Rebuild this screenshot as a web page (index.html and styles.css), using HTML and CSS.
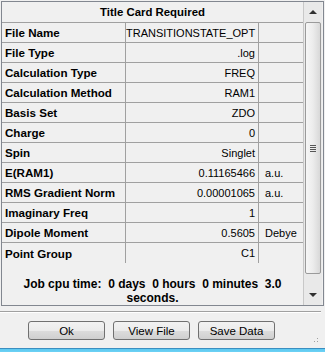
FILE: index.html
```html
<!DOCTYPE html>
<html lang="en">
<head>
    <meta charset="UTF-8">
    <title>Title Card Required</title>
    <link rel="stylesheet" href="styles.css">
</head>
<body>
    <div class="panel">
        <div class="sheet">
            <div class="title">Title Card Required</div>
            <table class="props">
                <tr><td class="name">File Name</td><td class="value">TRANSITIONSTATE_OPT</td><td class="unit"></td></tr>
                <tr><td class="name">File Type</td><td class="value">.log</td><td class="unit"></td></tr>
                <tr><td class="name">Calculation Type</td><td class="value">FREQ</td><td class="unit"></td></tr>
                <tr><td class="name">Calculation Method</td><td class="value">RAM1</td><td class="unit"></td></tr>
                <tr><td class="name">Basis Set</td><td class="value">ZDO</td><td class="unit"></td></tr>
                <tr><td class="name">Charge</td><td class="value">0</td><td class="unit"></td></tr>
                <tr><td class="name">Spin</td><td class="value">Singlet</td><td class="unit"></td></tr>
                <tr><td class="name">E(RAM1)</td><td class="value">0.11165466</td><td class="unit">a.u.</td></tr>
                <tr><td class="name">RMS Gradient Norm</td><td class="value">0.00001065</td><td class="unit">a.u.</td></tr>
                <tr><td class="name">Imaginary Freq</td><td class="value">1</td><td class="unit"></td></tr>
                <tr><td class="name">Dipole Moment</td><td class="value">0.5605</td><td class="unit">Debye</td></tr>
                <tr class="last"><td class="name">Point Group</td><td class="value">C1</td><td class="unit"></td></tr>
            </table>
            <div class="cpu">Job cpu time:  0 days  0 hours  0 minutes  3.0<br>seconds.</div>
        </div>
        <div class="scrollbar">
            <div class="arrow"><span class="tri up"></span></div>
            <div class="thumb"><span class="grip"></span></div>
            <div class="track"></div>
            <div class="arrow"><span class="tri down"></span></div>
        </div>
    </div>

    <div class="separator"></div>

    <div class="actions">
        <button class="btn">Ok</button>
        <button class="btn">View File</button>
        <button class="btn">Save Data</button>
        <span class="resize-grip"></span>
    </div>

    <div class="taskbar"></div>
</body>
</html>
```

FILE: styles.css
```css
body {
    margin: 0;
    width: 325px;
    height: 352px;
    overflow: hidden;
    background-color: #f0f0f0;
    font-family: "Liberation Sans", Arial, sans-serif;
    font-size: 11px;
    color: #000;
}

.panel {
    display: flex;
    margin: 1px 1px 0 1px;
    height: 303px;
    border: 1px solid #828790;
    background-color: #f0f0f0;
}

.sheet {
    width: 301px;
}

.title {
    height: 20px;
    line-height: 20px;
    text-align: center;
    font-weight: bold;
    font-size: 11.4px;
    border-bottom: 1px solid #a0a0a0;
}

.props {
    width: 301px;
    border-collapse: collapse;
    table-layout: fixed;
}

.props td {
    height: 19px;
    padding: 0;
    border-bottom: 1px solid #a0a0a0;
    border-right: 1px solid #a0a0a0;
    white-space: nowrap;
}

.props tr.last td {
    border-bottom: none;
    height: 20px;
}

.props .name {
    width: 120px;
    padding-left: 3px;
    font-weight: bold;
    font-size: 11.6px;
}

.props .value {
    width: 129px;
    padding-right: 3px;
    text-align: right;
}

.props .unit {
    padding-left: 6px;
    border-right: none;
}

.cpu {
    padding-top: 14px;
    line-height: 14px;
    text-align: center;
    font-weight: bold;
    font-size: 12px;
    white-space: pre;
}

/* scrollbar */
.scrollbar {
    display: flex;
    flex-direction: column;
    width: 18px;
    border-left: 1px solid #c8c8c8;
    background-color: #e9e9e9;
}

.arrow {
    height: 20px;
    display: flex;
    align-items: center;
    justify-content: center;
}

.tri {
    width: 0;
    height: 0;
    border-left: 4px solid transparent;
    border-right: 4px solid transparent;
}

.tri.up {
    border-bottom: 4px solid #303030;
}

.tri.down {
    border-top: 4px solid #303030;
}

.thumb {
    height: 250px;
    margin: 0 1px;
    border: 1px solid #9a9a9a;
    border-radius: 2px;
    background: linear-gradient(to right, #f6f6f6, #ececec 50%, #d8d8d8);
    display: flex;
    align-items: center;
    justify-content: center;
}

.grip {
    width: 6px;
    height: 7px;
    background: repeating-linear-gradient(to bottom, #555 0 1px, transparent 1px 2px);
}

.track {
    flex: 1;
}

.separator {
    margin-top: 5px;
    width: 321px;
    height: 1px;
    background-color: #a0a0a0;
    border-bottom: 1px solid #ffffff;
}

.actions {
    position: relative;
    display: flex;
    gap: 8px;
    padding: 8px 0 0 28px;
    height: 27px;
}

.btn {
    width: 77px;
    height: 19px;
    padding: 0;
    border: 1px solid #707070;
    border-radius: 3px;
    background: linear-gradient(to bottom, #f2f2f2, #ebebeb 50%, #dddddd 50%, #cfcfcf);
    font-family: "Liberation Sans", Arial, sans-serif;
    font-size: 11.5px;
    color: #000;
}

.resize-grip {
    position: absolute;
    right: 5px;
    bottom: 4px;
    width: 10px;
    height: 10px;
    background:
        radial-gradient(circle, #a0a0a0 0.8px, transparent 1px) 0 0 / 3px 3px;
    clip-path: polygon(100% 0, 100% 100%, 0 100%);
}

.taskbar {
    height: 6px;
    border-top: 1px solid #3b8ec0;
    background: linear-gradient(to bottom, #5cc8f0, #7fdcfa);
}
```
